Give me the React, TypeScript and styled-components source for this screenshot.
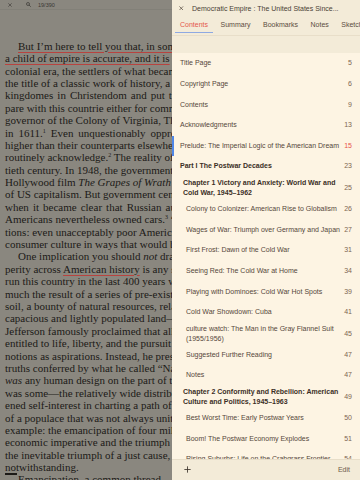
import React from "react";
import styled, { createGlobalStyle } from "styled-components";

const GlobalStyle = createGlobalStyle`
  html, body { margin: 0; padding: 0; }
  body {
    width: 360px;
    height: 480px;
    overflow: hidden;
    font-family: "Liberation Sans", Arial, sans-serif;
  }
  #root { width: 360px; height: 480px; }
`;

const Screen = styled.div`
  display: flex;
  width: 360px;
  height: 480px;
  overflow: hidden;
`;

/* ---------- book page (dimmed) ---------- */

const PageArea = styled.main`
  flex: 0 0 172px;
  width: 172px;
  display: flex;
  flex-direction: column;
  background: #8a877f;
  overflow: hidden;
`;

const PageTopBar = styled.div`
  height: 10px;
  flex: 0 0 10px;
  display: flex;
  align-items: center;
  padding-left: 8px;
  gap: 14px;
  border-bottom: 1px solid rgba(0, 0, 0, 0.05);
  color: #3a3834;
  font-family: "Liberation Sans", Arial, sans-serif;
  font-size: 5.5px;
  box-sizing: border-box;
`;

const TopGroup = styled.div`
  display: flex;
  align-items: center;
  gap: 7px;
`;

const Prose = styled.div`
  padding: 29.8px 0 0 5px;
  font-family: "Liberation Serif", "Times New Roman", serif;
  font-size: 11px;
  line-height: 12.4px;
  color: #1c1a17;
`;

const Line = styled.div<{ $indent?: boolean; $ws?: number }>`
  height: 12.4px;
  white-space: nowrap;
  padding-left: ${(p) => (p.$indent ? "13px" : "0")};
  word-spacing: ${(p) => p.$ws ?? 0}px;
`;

const Marked = styled.span`
  text-decoration: underline;
  text-decoration-color: #b8433f;
  text-decoration-thickness: 1px;
  text-underline-offset: 2px;
`;

const Note = styled.sup`
  font-size: 6px;
  line-height: 0;
  vertical-align: 4px;
`;

const Rule = styled.span`
  display: inline-block;
  width: 12px;
  height: 2px;
  background: #1c1a17;
  vertical-align: 8px;
  margin-right: 1px;
`;

/* ---------- contents panel ---------- */

const Panel = styled.aside`
  flex: 1;
  min-width: 0;
  display: flex;
  flex-direction: column;
  background: #fdf4e3;
  font-family: "Liberation Sans", Arial, sans-serif;
  font-size: 7px;
`;

const Header = styled.header`
  flex: 0 0 auto;
  display: flex;
  flex-direction: column;
  background: #f3ebd8;
`;

const TitleRow = styled.div`
  height: 16px;
  display: flex;
  align-items: center;
  padding-left: 7px;
  gap: 8.5px;
  color: #4a3f36;
  white-space: nowrap;
`;

const TabRow = styled.nav`
  height: 20px;
  display: flex;
  align-items: flex-start;
  gap: 2.5px;
  padding-left: 3px;
  overflow: hidden;
  border-bottom: 1px solid #e8dec9;
  box-sizing: border-box;
`;

const Tab = styled.div<{ $active?: boolean }>`
  flex: 0 0 auto;
  box-sizing: border-box;
  height: 16.5px;
  padding: 4px 5px 0;
  line-height: 10px;
  white-space: nowrap;
  color: ${(p) => (p.$active ? "#e4574d" : "#5b4c3f")};
  border-bottom: 1px solid ${(p) => (p.$active ? "#8ea9e2" : "transparent")};
`;

const SearchGap = styled.div`
  height: 17px;
`;

const List = styled.div`
  flex: 1;
  min-height: 0;
  overflow: hidden;
`;

const Row = styled.div<{ $level: number; $bold?: boolean; $active?: boolean }>`
  display: flex;
  align-items: center;
  gap: 1px;
  min-height: 20.625px;
  box-sizing: border-box;
  padding: 1px 8px 1px ${(p) => 8 + p.$level * 3}px;
  line-height: 10px;
  color: ${(p) => (p.$bold ? "#3b2f26" : "#55473b")};
  font-weight: ${(p) => (p.$bold ? 700 : 400)};
  box-shadow: ${(p) => (p.$active ? "inset 2px 0 0 #4f86e6" : "none")};
`;

const RowTitle = styled.span`
  flex: 1;
  min-width: 0;
`;

const RowPage = styled.span<{ $active?: boolean }>`
  flex: 0 0 auto;
  font-weight: 400;
  color: ${(p) => (p.$active ? "#e8544b" : "#7d6651")};
`;

const Toolbar = styled.footer`
  flex: 0 0 21.5px;
  height: 21.5px;
  box-sizing: border-box;
  display: flex;
  align-items: center;
  justify-content: space-between;
  padding: 0 10px 0 12px;
  background: #f3ebd8;
  border-top: 1px solid #e8dec9;
  color: #6e5b4b;
`;

const ToolButton = styled.span`
  display: flex;
  align-items: center;
  line-height: 10px;
`;

type Entry = { t: string; n: number; level?: number; bold?: boolean; active?: boolean };

const toc: Entry[] = [
  { t: "Title Page", n: 5 },
  { t: "Copyright Page", n: 6 },
  { t: "Contents", n: 9 },
  { t: "Acknowledgments", n: 13 },
  { t: "Prelude: The Imperial Logic of the American Dream", n: 15, active: true },
  { t: "Part I The Postwar Decades", n: 23, bold: true },
  { t: "Chapter 1 Victory and Anxiety: World War and Cold War, 1945–1962", n: 25, level: 1, bold: true },
  { t: "Colony to Colonizer: American Rise to Globalism", n: 26, level: 2 },
  { t: "Wages of War: Triumph over Germany and Japan", n: 27, level: 2 },
  { t: "First Frost: Dawn of the Cold War", n: 31, level: 2 },
  { t: "Seeing Red: The Cold War at Home", n: 34, level: 2 },
  { t: "Playing with Dominoes: Cold War Hot Spots", n: 39, level: 2 },
  { t: "Cold War Showdown: Cuba", n: 41, level: 2 },
  { t: "culture watch: The Man in the Gray Flannel Suit (1955/1956)", n: 45, level: 2 },
  { t: "Suggested Further Reading", n: 47, level: 2 },
  { t: "Notes", n: 47, level: 2 },
  { t: "Chapter 2 Conformity and Rebellion: American Culture and Politics, 1945–1963", n: 49, level: 1, bold: true },
  { t: "Best Worst Time: Early Postwar Years", n: 50, level: 2 },
  { t: "Boom! The Postwar Economy Explodes", n: 51, level: 2 },
  { t: "Rising Suburbs: Life on the Crabgrass Frontier", n: 54, level: 2 },
];

const tabs = ["Contents", "Summary", "Bookmarks", "Notes", "Sketches"];

const CloseIcon = ({ size, color }: { size: number; color: string }) => (
  <svg width={size} height={size} viewBox="0 0 10 10">
    <path d="M1.5 1.5 L8.5 8.5 M8.5 1.5 L1.5 8.5" stroke={color} strokeWidth="1.5" strokeLinecap="round" />
  </svg>
);

const SearchIcon = () => (
  <svg width="5" height="5" viewBox="0 0 10 10">
    <circle cx="4" cy="4" r="3" fill="none" stroke="#3a3834" strokeWidth="1.4" />
    <path d="M6.3 6.3 L9 9" stroke="#3a3834" strokeWidth="1.5" strokeLinecap="round" />
  </svg>
);

const PlusIcon = () => (
  <svg width="7" height="7" viewBox="0 0 10 10">
    <path d="M5 0.5 V9.5 M0.5 5 H9.5" stroke="#3b332c" strokeWidth="1.2" />
  </svg>
);

export default function App() {
  return (
    <>
      <GlobalStyle />
      <Screen>
        <PageArea>
          <PageTopBar>
            <CloseIcon size={4} color="#3a3834" />
            <TopGroup>
              <SearchIcon />
              <span>19/390</span>
            </TopGroup>
          </PageTopBar>
          <Prose>
            <Line $indent>
              <Marked>But I’m here to tell you that, in some</Marked>
            </Line>
            <Line>
              <Marked>a child of empire is accurate, and it is</Marked> so
            </Line>
            <Line>colonial era, the settlers of what became</Line>
            <Line>the title of a classic work of history, a people</Line>
            <Line $ws={1.3}>kingdomes in Christendom and put them</Line>
            <Line>pare with this countrie either for commodities</Line>
            <Line>governor of the Colony of Virginia, Thomas</Line>
            <Line $ws={2.2}>
              in 1611.<Note>1</Note> Even unquestionably oppressed
            </Line>
            <Line>higher than their counterparts elsewhere</Line>
            <Line>
              routinely acknowledge.<Note>2</Note> The reality of American
            </Line>
            <Line>tieth century. In 1948, the government</Line>
            <Line>
              Hollywood film <i>The Grapes of Wrath</i> to
            </Line>
            <Line>of US capitalism. But government censors</Line>
            <Line $ws={1.3}>when it became clear that Russian audiences</Line>
            <Line>
              Americans nevertheless owned cars.<Note>3</Note> “This
            </Line>
            <Line>tions: even unacceptably poor Americans</Line>
            <Line>consumer culture in ways that would be</Line>
            <Line $indent>
              One implication you should <i>not</i> draw
            </Line>
            <Line>
              perity across <Marked>American history</Marked> is any sense
            </Line>
            <Line>run this country in the last 400 years were</Line>
            <Line>much the result of a series of pre-existing</Line>
            <Line>soil, a bounty of natural resources, relatively</Line>
            <Line>capacious and lightly populated land—lightly</Line>
            <Line>Jefferson famously proclaimed that all men</Line>
            <Line>entitled to life, liberty, and the pursuit</Line>
            <Line>notions as aspirations. Instead, he presented</Line>
            <Line>truths conferred by what he called “Nature’s</Line>
            <Line>
              <i>was</i> any human design on the part of the
            </Line>
            <Line>was some—the relatively wide distribution</Line>
            <Line>ened self-interest in charting a path of</Line>
            <Line>of a populace that was not always united</Line>
            <Line>example: the emancipation of four million</Line>
            <Line>economic imperative and the triumph of</Line>
            <Line>the inevitable triumph of a just cause, the</Line>
            <Line>notwithstanding.</Line>
            <Line>
              <Rule />Emancipation, a common thread
            </Line>
          </Prose>
        </PageArea>

        <Panel>
          <Header>
            <TitleRow>
              <CloseIcon size={4.5} color="#4a3f36" />
              <span>Democratic Empire : The United States Since...</span>
            </TitleRow>
            <TabRow>
              {tabs.map((t, i) => (
                <Tab key={t} $active={i === 0}>
                  {t}
                </Tab>
              ))}
            </TabRow>
            <SearchGap />
          </Header>

          <List>
            {toc.map((e) => (
              <Row key={e.t} $level={e.level ?? 0} $bold={e.bold} $active={e.active}>
                <RowTitle>{e.t}</RowTitle>
                <RowPage $active={e.active}>{e.n}</RowPage>
              </Row>
            ))}
          </List>

          <Toolbar>
            <ToolButton>
              <PlusIcon />
            </ToolButton>
            <ToolButton>Edit</ToolButton>
          </Toolbar>
        </Panel>
      </Screen>
    </>
  );
}
